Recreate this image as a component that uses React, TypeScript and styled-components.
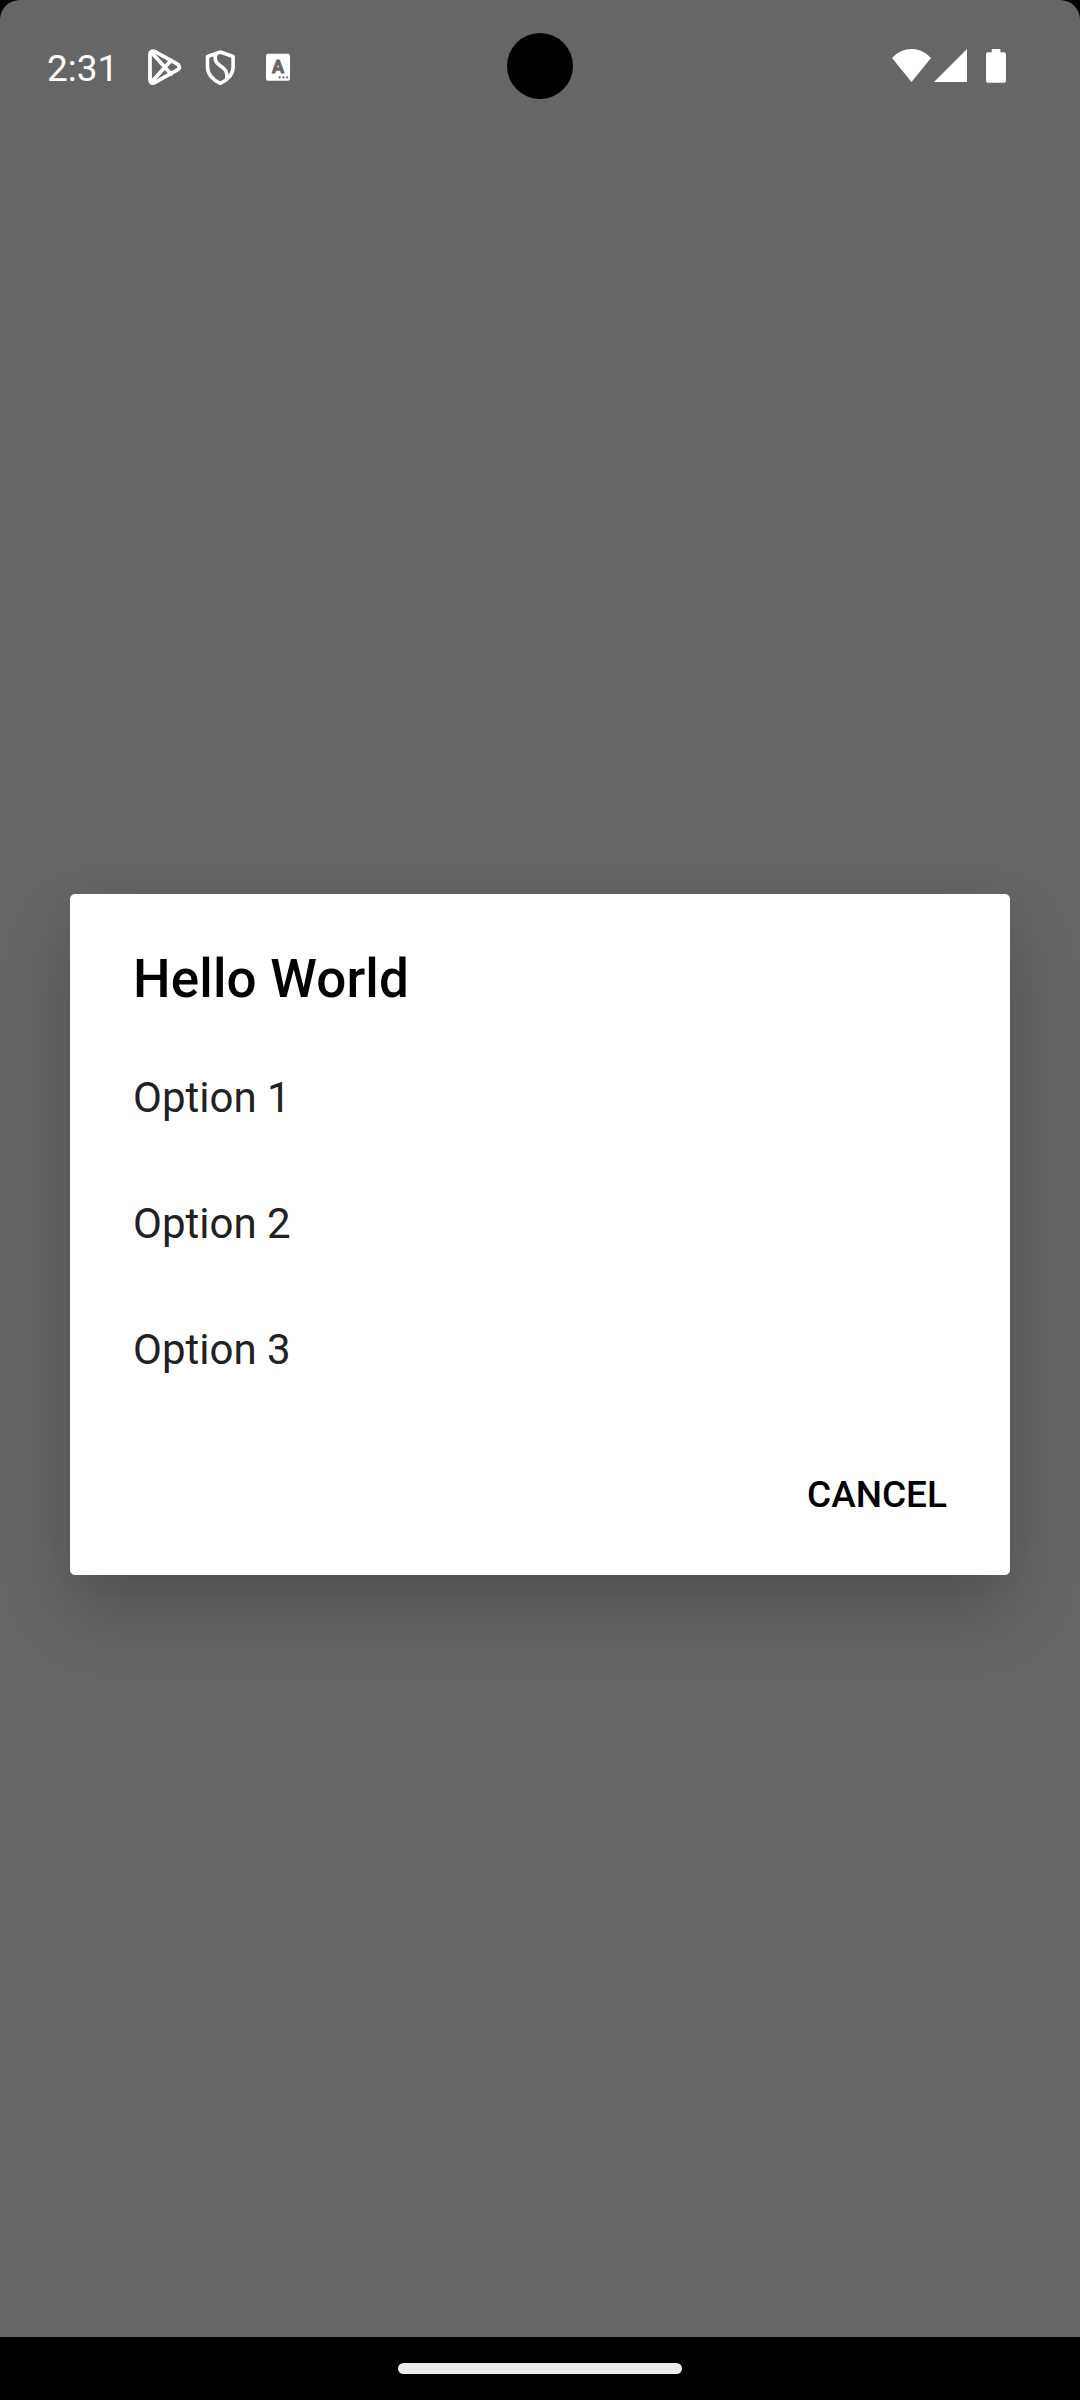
import React from "react";
import styled, { createGlobalStyle } from "styled-components";

const GlobalStyle = createGlobalStyle`
  html, body { margin: 0; background: #000; }
  * { box-sizing: border-box; }
`;

const Screen = styled.div`
  width: 1080px;
  height: 2400px;
  display: flex;
  flex-direction: column;
  background: #000;
  font-family: Roboto, "Liberation Sans", sans-serif;
  overflow: hidden;
`;

const Scrim = styled.main`
  position: relative;
  height: 2337px;
  display: flex;
  flex-direction: column;
  background: #666;
  border-radius: 20px 20px 0 0;
  overflow: hidden;
`;

const StatusBar = styled.header`
  height: 134px;
  flex: none;
  display: flex;
  align-items: center;
  justify-content: space-between;
  padding: 0 73px 0 47px;
`;

const StatusGroup = styled.div`
  display: flex;
  align-items: center;
`;

const Clock = styled.time`
  width: 95px;
  padding-top: 4px;
  font-size: 37px;
  line-height: 44px;
  color: #fff;
`;

const Icon = styled.svg<{ $w: number }>`
  display: block;
  width: ${(p) => p.$w}px;
  height: 44px;
  flex: none;
  fill: #fff;
`;

const Camera = styled.div`
  position: absolute;
  top: 33px;
  left: 507px;
  width: 66px;
  height: 66px;
  border-radius: 50%;
  background: #000;
`;

const Stage = styled.div`
  padding: 760px 70px 0;
`;

const Dialog = styled.section`
  height: 681px;
  border-radius: 5px;
  background: #fff;
  box-shadow: 0 36px 76px rgba(0, 0, 0, 0.2), 0 0 36px rgba(0, 0, 0, 0.03);
`;

const Title = styled.h1`
  margin: 0;
  height: 141px;
  padding: 54px 63px 0;
  font-size: 53px;
  font-weight: 500;
  line-height: 62px;
  letter-spacing: 0.15px;
  color: #000;
`;

const Options = styled.ul`
  margin: 0;
  padding: 0;
  list-style: none;
`;

const Option = styled.li`
  height: 126px;
  padding: 0 63px;
  font-size: 42px;
  line-height: 126px;
  color: #212121;
`;

const Actions = styled.footer`
  height: 162px;
  display: flex;
  align-items: center;
  justify-content: flex-end;
  padding: 2px 63px 0 0;
`;

const TextButton = styled.button`
  border: 0;
  padding: 0;
  background: none;
  font-family: inherit;
  font-size: 37px;
  font-weight: 500;
  line-height: 44px;
  color: #000;
`;

const NavBar = styled.nav`
  height: 63px;
  display: flex;
  justify-content: center;
  padding-top: 26px;
`;

const Handle = styled.div`
  width: 284px;
  height: 11px;
  border-radius: 6px;
  background: #ebebeb;
`;

const PlayIcon = () => (
  <Icon $w={58} viewBox="142 45 58 44">
    <g fill="none" stroke="#fff" strokeWidth="3.8" strokeLinejoin="round" strokeLinecap="round">
      <path d="M150 54.5v25.200c0 3 2.400 4.200 5 2.700l22-12.200c3-1.700 3-4.700 0-6.400L155 51.700c-2.600-1.500-5-.2-5 2.800Z" />
      <path d="M151.500 52.500 171 74M151.500 82 171 60.500" />
    </g>
  </Icon>
);

const ShieldIcon = () => (
  <Icon $w={60} viewBox="200 45 60 44">
    <g fill="none" stroke="#fff" strokeWidth="3.600" strokeLinejoin="round">
      <path d="M220.300 52 207.500 56.500v10.500c0 7 5.300 13 12.800 16.300 7.500-3.300 12.800-9.300 12.800-16.300V56.500Z" />
      <path d="M216 54c-2.200 5-.5 8.500 4 11.500 5.500 3.700 8 7 6.500 13" />
    </g>
  </Icon>
);

const TextBoxIcon = () => (
  <Icon $w={36} viewBox="260 45 36 44">
    <rect x="266" y="53.700" width="24" height="27" rx="2" />
    <text x="278.100" y="73" textAnchor="middle" fontSize="18" fontWeight="700" fill="#666" stroke="#666" strokeWidth="0.8" strokeLinejoin="round">A</text>
    <g fill="#666">
      <circle cx="279.700" cy="77.300" r="1.150" />
      <circle cx="283.500" cy="77.300" r="1.150" />
      <circle cx="287.300" cy="77.300" r="1.150" />
    </g>
  </Icon>
);

const WifiIcon = () => (
  <Icon $w={42} viewBox="891 45 42 44">
    <path d="M892 58C903 46 920 46 931 58L911.500 82Z" />
  </Icon>
);

const SignalIcon = () => (
  <Icon $w={50} viewBox="933 45 50 44">
    <path d="M934 82 967 49V82Z" />
  </Icon>
);

const BatteryIcon = () => (
  <Icon $w={24} viewBox="983 45 24 44">
    <path d="M991.700 49h8.700v3.200h3.600a2 2 0 0 1 2 2v26.600a2 2 0 0 1-2 2h-16a2 2 0 0 1-2-2V54.200a2 2 0 0 1 2-2h3.700Z" />
  </Icon>
);

const options = ["Option 1", "Option 2", "Option 3"];

export default function App() {
  return (
    <Screen>
      <GlobalStyle />
      <Scrim>
        <StatusBar>
          <StatusGroup>
            <Clock>2:31</Clock>
            <PlayIcon />
            <ShieldIcon />
            <TextBoxIcon />
          </StatusGroup>
          <StatusGroup>
            <WifiIcon />
            <SignalIcon />
            <BatteryIcon />
          </StatusGroup>
        </StatusBar>
        <Camera />
        <Stage>
          <Dialog role="dialog" aria-labelledby="dialog-title">
            <Title id="dialog-title">Hello World</Title>
            <Options>
              {options.map((label) => (
                <Option key={label}>{label}</Option>
              ))}
            </Options>
            <Actions>
              <TextButton type="button">CANCEL</TextButton>
            </Actions>
          </Dialog>
        </Stage>
      </Scrim>
      <NavBar>
        <Handle />
      </NavBar>
    </Screen>
  );
}
